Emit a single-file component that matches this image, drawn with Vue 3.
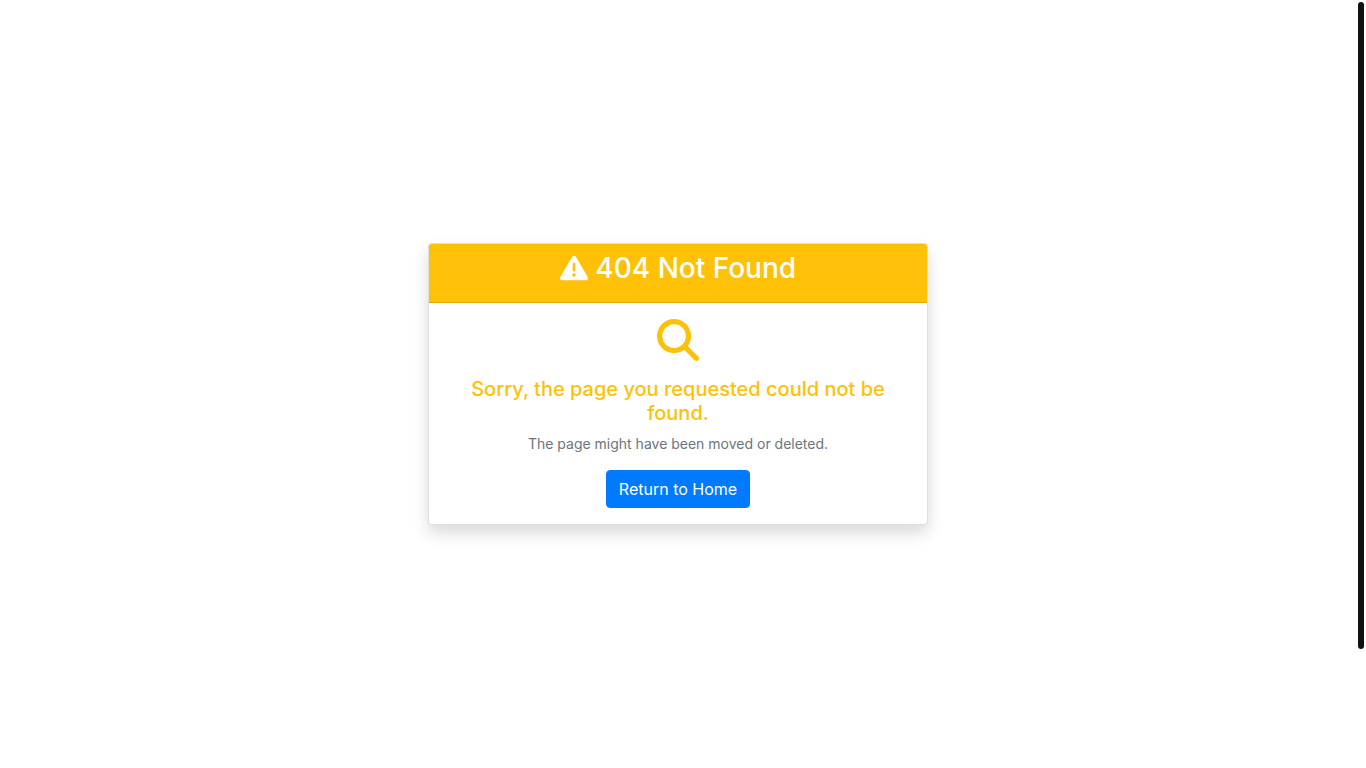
<script setup>
const status = { title: '404 Not Found', message: 'Sorry, the page you requested could not be found.', hint: 'The page might have been moved or deleted.' }
</script>

<template>
  <div class="page">
    <main class="content">
      <section class="card">
        <header class="card-header">
          <h1 class="title">
            <svg class="warning-icon" viewBox="0 0 512 512" aria-hidden="true">
              <path fill="currentColor" d="M256 32c14.200 0 27.300 7.500 34.500 19.800l216 368c7.300 12.400 7.300 27.700 .2 40.100S486.300 480 472 480H40c-14.300 0-27.600-7.700-34.700-20.100s-7-27.800 .2-40.100l216-368C228.700 39.500 241.800 32 256 32zm0 128c-13.300 0-24 10.700-24 24V296c0 13.300 10.700 24 24 24s24-10.700 24-24V184c0-13.300-10.700-24-24-24zm32 224a32 32 0 1 0-64 0 32 32 0 1 0 64 0z" />
            </svg>
            {{ status.title }}
          </h1>
        </header>
        <div class="card-body">
          <svg class="search-icon" viewBox="0 0 512 512" aria-hidden="true">
            <path fill="currentColor" d="M416 208c0 45.900-14.900 88.300-40 122.700L502.600 457.400c12.500 12.500 12.500 32.800 0 45.300s-32.800 12.500-45.300 0L330.700 376c-34.400 25.200-76.800 40-122.700 40C93.100 416 0 322.900 0 208S93.100 0 208 0S416 93.100 416 208zM208 352a144 144 0 1 0 0-288 144 144 0 1 0 0 288z" />
          </svg>
          <h2 class="message">{{ status.message }}</h2>
          <p class="hint">{{ status.hint }}</p>
          <a class="home-link" href="/">Return to Home</a>
        </div>
      </section>
    </main>
    <div class="scroll-rail" aria-hidden="true">
      <div class="scroll-thumb"></div>
    </div>
  </div>
</template>

<style>
body {
  margin: 0;
  background: #fff;
}
</style>

<style scoped>
.page {
  display: flex;
  height: 100vh;
  font-family: Inter, sans-serif;
  font-size: 14px;
  line-height: 21px;
}

.content {
  flex: 1;
  display: flex;
  align-items: center;
  justify-content: center;
}

.card {
  box-sizing: border-box;
  width: 100%;
  max-width: 500px;
  border: 1px solid rgba(0, 0, 0, 0.125);
  border-radius: 4px;
  background: #fff;
  box-shadow: 0 8px 16px rgba(0, 0, 0, 0.15);
  text-align: center;
}

.card-header {
  padding: 7px 20px 17px;
  border-bottom: 1px solid rgba(0, 0, 0, 0.125);
  border-radius: 3px 3px 0 0;
  background: #ffc107;
  color: #fff;
}

.title {
  margin: 0;
  font-size: 28px;
  font-weight: 500;
  line-height: 34px;
}

.warning-icon {
  width: 28px;
  height: 28px;
  vertical-align: -4px;
}

.card-body {
  padding: 16px 20px;
}

.search-icon {
  display: block;
  width: 42px;
  height: 42px;
  margin: 0 auto 16px;
  color: #ffc107;
}

.message {
  margin: 0 0 8px;
  color: #ffc107;
  font-size: 20px;
  font-weight: 500;
  line-height: 24px;
}

.hint {
  margin: 0 0 16px;
  color: #6c757d;
}

.home-link {
  display: block;
  width: fit-content;
  margin: 0 auto;
  padding: 6px 12px;
  border: 1px solid #007bff;
  border-radius: 4px;
  background: #007bff;
  color: #fff;
  font-size: 16px;
  line-height: 24px;
  text-decoration: none;
}

.scroll-rail {
  box-sizing: border-box;
  width: 10px;
  padding: 2px;
}

.scroll-thumb {
  height: 84.7%;
  border-radius: 3px;
  background: #111;
}
</style>
